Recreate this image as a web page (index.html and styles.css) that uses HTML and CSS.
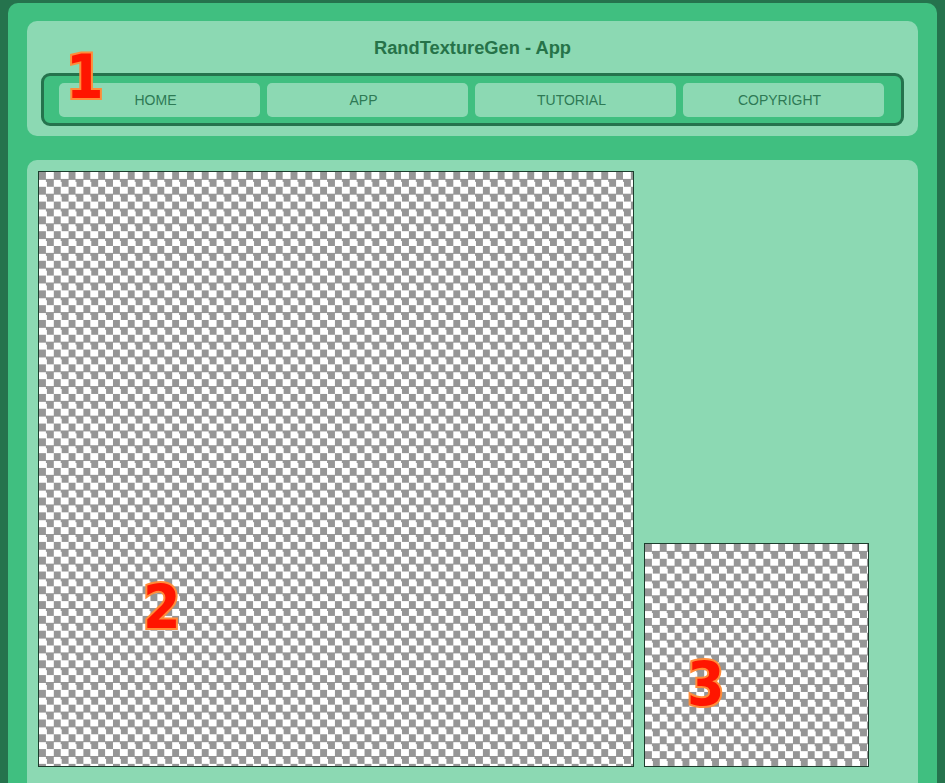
FILE: index.html
```html
<!DOCTYPE html>
<html>
<head>
<meta charset="utf-8">
<title>RandTextureGen - App</title>
<link rel="stylesheet" href="styles.css">
</head>
<body>
<div class="page">
  <header class="panel header">
    <h1 class="title">RandTextureGen - App</h1>
    <nav class="nav">
      <a class="nav-btn">HOME</a>
      <a class="nav-btn">APP</a>
      <a class="nav-btn">TUTORIAL</a>
      <a class="nav-btn">COPYRIGHT</a>
    </nav>
    <span class="mark mark-1">1</span>
  </header>
  <main class="panel main">
    <div class="canvas canvas-big"><span class="mark mark-2">2</span></div>
    <div class="canvas canvas-small"><span class="mark mark-3">3</span></div>
  </main>
</div>
</body>
</html>
```
FILE: styles.css
```css
html, body {
  height: 100%;
}
body {
  margin: 3px 8px 0;
  background: #25734d;
  font-family: "Liberation Sans", Arial, sans-serif;
  overflow: hidden;
}
.page {
  background: #40bf80;
  border-radius: 10px 10px 0 0;
  padding: 18px 19px 0;
  min-height: 100%;
  box-sizing: border-box;
}
.panel {
  background: #8cd9b3;
  border-radius: 10px;
}
.header {
  position: relative;
  padding: 17px 14px 10px;
}
.title {
  margin: 0 0 15px;
  font-size: 18.3px;
  line-height: 20px;
  font-weight: bold;
  text-align: center;
  color: #267349;
}
.nav {
  display: flex;
  gap: 7px;
  border: 3px solid #25734d;
  border-radius: 9px;
  background: #40bf80;
  padding: 7px 17px 6px 15px;
}
.nav-btn {
  flex: 1;
  height: 34px;
  line-height: 34px;
  padding-right: 8px;
  text-align: center;
  background: #8cd9b3;
  border-radius: 5px;
  font-size: 14px;
  color: #2e7a55;
}
.main {
  margin-top: 24px;
  padding: 11px 11px 30px;
  display: flex;
  align-items: flex-end;
  gap: 10px;
}
.canvas {
  position: relative;
  flex: none;
  border: 1px solid #1c3d2d;
  box-sizing: border-box;
  background-color: #fff;
  background-image: conic-gradient(#fff 0 25%, #969696 0 50%, #fff 0 75%, #969696 0);
  background-size: 14.8px 14.8px;
}
.canvas-big {
  width: 596px;
  height: 596px;
}
.canvas-small {
  width: 225px;
  height: 224px;
}
.mark {
  position: absolute;
  font-family: "DejaVu Sans", sans-serif;
  font-stretch: condensed;
  font-weight: 700;
  font-size: 60px;
  line-height: 1;
  color: #ff1500;
  -webkit-text-stroke: 4px #ff8c3a;
  paint-order: stroke fill;
}
.mark-1 {
  left: 39px;
  top: 26px;
}
.mark-2 {
  left: 104px;
  top: 405px;
}
.mark-3 {
  left: 42px;
  top: 110px;
}
```
